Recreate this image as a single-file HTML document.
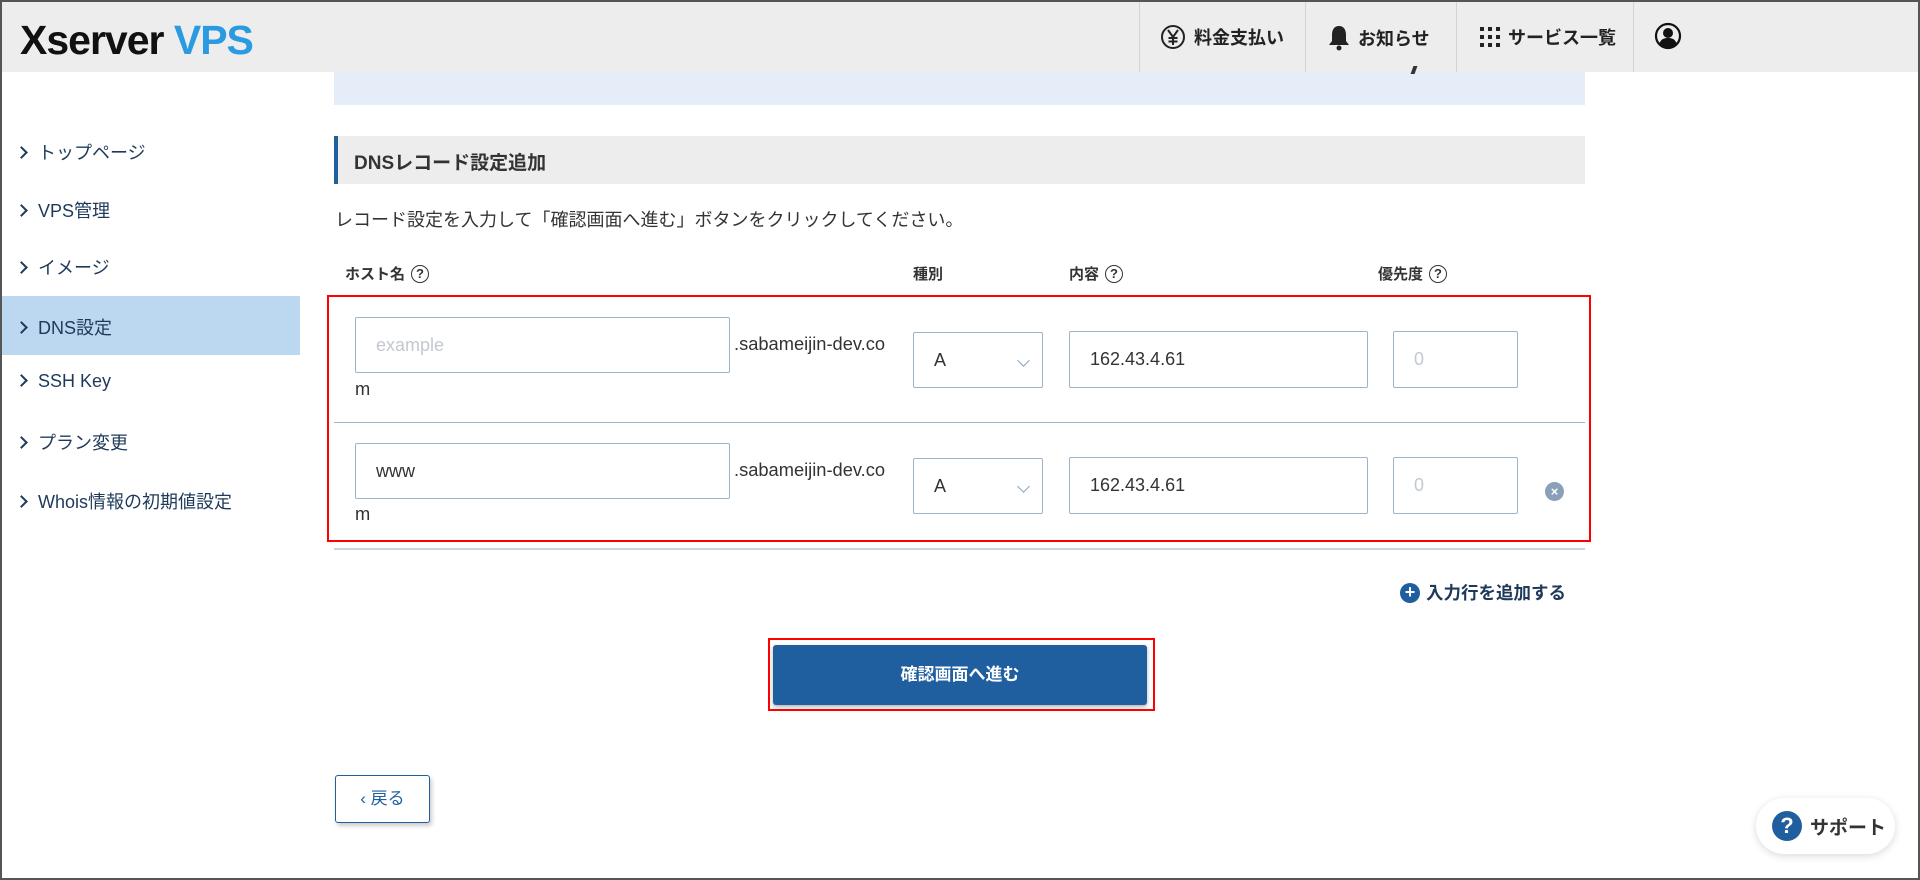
<!DOCTYPE html>
<html><head><meta charset="utf-8"><style>
*{box-sizing:border-box;margin:0;padding:0}
body{width:1920px;height:880px;position:relative;overflow:hidden;background:#fff;font-family:"Liberation Sans","Noto Sans CJK JP",sans-serif;color:#333;}
.a{position:absolute}
.frame{left:0;top:0;width:1920px;height:880px;border:2px solid #555;border-top-width:2px;z-index:50;pointer-events:none}
.hdr{left:0;top:0;width:1920px;height:72px;background:#ededed}
.logo{left:20px;top:17px;font-size:41px;font-weight:bold;letter-spacing:-1px;color:#111}
.logo span{color:#2a9be0}
.sep{top:0;width:1px;height:72px;background:#d4d4d4}
.nav{top:24px;font-size:18px;font-weight:bold;color:#222;display:flex;align-items:center;gap:8px}
.side{left:17px;font-size:18px;color:#1d3a5a}
.side:before{content:"";display:inline-block;width:7px;height:7px;border-right:2px solid #1d3a5a;border-top:2px solid #1d3a5a;transform:rotate(45deg);margin-right:12px;position:relative;top:-2px}
.inp{border:1px solid #9cb4cc;border-radius:2px;background:#fff;font-size:18px;padding-left:20px;display:flex;align-items:center;color:#333}
.ph{color:#c2c9d1}
.lbl{font-size:15px;font-weight:bold;color:#333;display:flex;align-items:center;gap:6px}
.q{display:inline-block;width:18px;height:18px;border:1.5px solid #333;border-radius:50%;font-size:13px;line-height:15px;text-align:center;font-weight:bold}
.chev{width:9px;height:9px;border-right:1.5px solid #8aa4c0;border-bottom:1.5px solid #8aa4c0;transform:rotate(45deg)}
.dom{font-size:18.3px;color:#333}
</style></head><body>
<div class="a hdr"></div>
<div class="a logo">Xserver <span>VPS</span></div>
<div class="a sep" style="left:1139px"></div>
<div class="a sep" style="left:1305px"></div>
<div class="a sep" style="left:1456px"></div>
<div class="a sep" style="left:1633px"></div>
<div class="a nav" style="left:1160px"><svg width="26" height="26" viewBox="0 0 26 26"><circle cx="13" cy="13" r="11" fill="none" stroke="#222" stroke-width="2"/><path d="M8 6l5 7 5-7M13 13v8M8.5 14h9M8.5 17.5h9" stroke="#222" stroke-width="2" fill="none"/></svg>料金支払い</div>
<div class="a nav" style="left:1328px"><svg width="22" height="28" viewBox="0 0 22 28"><path d="M11 2c-5 0-7 4-7 9v6l-3 4h20l-3-4v-6c0-5-2-9-7-9z" fill="#222"/><circle cx="11" cy="24" r="2.5" fill="#222"/></svg>お知らせ</div>
<div class="a nav" style="left:1480px"><svg width="20" height="20" viewBox="0 0 20 20" fill="#222"><rect x="0" y="0" width="4" height="4"/><rect x="8" y="0" width="4" height="4"/><rect x="16" y="0" width="4" height="4"/><rect x="0" y="8" width="4" height="4"/><rect x="8" y="8" width="4" height="4"/><rect x="16" y="8" width="4" height="4"/><rect x="0" y="16" width="4" height="4"/><rect x="8" y="16" width="4" height="4"/><rect x="16" y="16" width="4" height="4"/></svg>サービス一覧</div>
<div class="a" style="left:1654px;top:22px"><svg width="28" height="28" viewBox="0 0 28 28"><circle cx="14" cy="14" r="12" fill="none" stroke="#111" stroke-width="2.2"/><circle cx="14" cy="11" r="5" fill="#111"/><path d="M5 22c2-5 5-6 9-6s7 1 9 6c-3 3-6 4-9 4s-6-1-9-4z" fill="#111"/></svg></div>

<div class="a" style="left:0;top:296px;width:300px;height:59px;background:#bcd7f0"></div>
<div class="a side" style="top:139px">トップページ</div>
<div class="a side" style="top:197px">VPS管理</div>
<div class="a side" style="top:254px">イメージ</div>
<div class="a side" style="top:314px">DNS設定</div>
<div class="a side" style="top:371px">SSH Key</div>
<div class="a side" style="top:429px">プラン変更</div>
<div class="a side" style="top:488px">Whois情報の初期値設定</div>

<div class="a" style="left:334px;top:72px;width:1251px;height:33px;background:#e5eef8"></div>
<div class="a" style="left:1412px;top:66px;width:4px;height:8px;background:#333;transform:skew(-20deg)"></div>
<div class="a" style="left:334px;top:136px;width:1251px;height:48px;background:#ededed;border-left:4px solid #1f5fa0"></div>
<div class="a" style="left:354px;top:148px;font-size:19px;font-weight:bold;color:#333">DNSレコード設定追加</div>
<div class="a" style="left:335px;top:206px;font-size:18px;color:#333">レコード設定を入力して「確認画面へ進む」ボタンをクリックしてください。</div>

<div class="a lbl" style="left:345px;top:263px">ホスト名<span class="q">?</span></div>
<div class="a lbl" style="left:913px;top:263px">種別</div>
<div class="a lbl" style="left:1069px;top:263px">内容<span class="q">?</span></div>
<div class="a lbl" style="left:1378px;top:263px">優先度<span class="q">?</span></div>

<div class="a" style="left:327px;top:295px;width:1264px;height:247px;border:2px solid #f00;z-index:5"></div>

<div class="a inp" style="left:355px;top:317px;width:375px;height:56px"><span class="ph">example</span></div>
<div class="a dom" style="left:734px;top:333px">.sabameijin-dev.co</div>
<div class="a dom" style="left:355px;top:378px">m</div>
<div class="a inp" style="left:913px;top:332px;width:130px;height:56px;justify-content:space-between;padding-right:14px">A<div class="chev"></div></div>
<div class="a inp" style="left:1069px;top:331px;width:299px;height:57px">162.43.4.61</div>
<div class="a inp" style="left:1393px;top:331px;width:125px;height:57px"><span class="ph">0</span></div>
<div class="a" style="left:334px;top:422px;width:1251px;height:1px;background:#9cb4cc"></div>

<div class="a inp" style="left:355px;top:443px;width:375px;height:56px">www</div>
<div class="a dom" style="left:734px;top:459px">.sabameijin-dev.co</div>
<div class="a dom" style="left:355px;top:503px">m</div>
<div class="a inp" style="left:913px;top:458px;width:130px;height:56px;justify-content:space-between;padding-right:14px">A<div class="chev"></div></div>
<div class="a inp" style="left:1069px;top:457px;width:299px;height:57px">162.43.4.61</div>
<div class="a inp" style="left:1393px;top:457px;width:125px;height:57px"><span class="ph">0</span></div>
<div class="a" style="left:1545px;top:482px;width:19px;height:19px;border-radius:50%;background:#8aa0b8;color:#fff;font-size:13px;font-weight:bold;text-align:center;line-height:19px">×</div>
<div class="a" style="left:334px;top:548px;width:1251px;height:2px;background:#c8d4e0"></div>

<div class="a" style="left:1400px;top:580px;display:flex;align-items:center;gap:6px;font-size:17.5px;font-weight:bold;color:#1d3a5a"><span style="width:20px;height:20px;border-radius:50%;background:#1f5fa0;color:#fff;font-size:18px;line-height:19px;text-align:center">+</span>入力行を追加する</div>

<div class="a" style="left:768px;top:638px;width:387px;height:73px;border:2px solid #f00"></div>
<div class="a" style="left:773px;top:645px;width:374px;height:60px;background:#1f5fa0;border-radius:3px;box-shadow:0 2px 4px rgba(0,0,0,.3);color:#fff;font-size:17px;font-weight:bold;text-align:center;line-height:60px">確認画面へ進む</div>

<div class="a" style="left:335px;top:775px;width:95px;height:48px;border:1.5px solid #1f5fa0;border-radius:3px;box-shadow:2px 3px 4px rgba(0,0,0,.2);color:#1f5fa0;font-size:17px;text-align:center;line-height:45px">&lsaquo; 戻る</div>

<div class="a" style="left:1756px;top:798px;width:139px;height:56px;border-radius:28px;background:#fff;box-shadow:0 2px 8px rgba(0,0,0,.15);display:flex;align-items:center;padding-left:16px;gap:8px;font-size:19px;font-weight:bold;color:#333"><span style="width:30px;height:30px;border-radius:50%;background:#1f5fa0;color:#fff;font-size:22px;line-height:30px;text-align:center">?</span>サポート</div>

<div class="a frame"></div>
</body></html>
